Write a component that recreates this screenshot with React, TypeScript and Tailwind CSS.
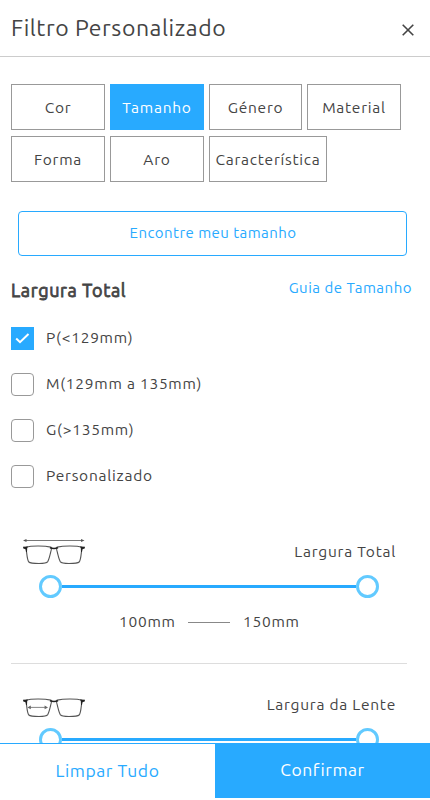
import React, { useState } from 'react';
import clsx from 'clsx';

const TABS = [
  { label: 'Cor', className: 'w-[94px]' },
  { label: 'Tamanho', className: 'w-[94px]' },
  { label: 'Género', className: 'w-[93px]' },
  { label: 'Material', className: 'w-[94px]' },
  { label: 'Forma', className: 'w-[94px]' },
  { label: 'Aro', className: 'w-[94px]' },
  { label: 'Característica', className: 'w-[118px]' },
];

const SIZES = ['P(<129mm)', 'M(129mm a 135mm)', 'G(>135mm)', 'Personalizado'];

function Glasses({ measure }: { measure: 'frame' | 'lens' }) {
  return (
    <svg width="64" height="32" viewBox="0 0 64 32" fill="none" className="block">
      {measure === 'frame' ? (
        <g fill="#555">
          <path d="M3 4.5H60" stroke="#777" strokeWidth="1" />
          <path d="M1 4.5L4.5 2.9V6.1ZM62.5 4.5L59 2.9V6.1Z" />
        </g>
      ) : (
        <g fill="#666">
          <path d="M7 18.4H24" stroke="#777" strokeWidth="0.9" />
          <path d="M5.4 18.4L8.8 16.6V20.2ZM26 18.4L22.6 16.6V20.2Z" />
        </g>
      )}
      <path
        d="M4 11.2C9 9.7 22 9.5 28.8 11.1C30.2 11.6 29.4 13.6 28.6 16.5C27.6 20.4 27 23.6 25.7 25.6C24.6 27.2 22 27.4 17 27.5C11.5 27.5 8.2 27.4 6.8 26C5.2 24.2 5 19 4.2 13"
        stroke="#555"
        strokeWidth="1.1"
      />
      <path
        d="M60 11.2C55 9.7 42 9.5 35.2 11.1C33.8 11.6 34.600 13.6 35.4 16.5C36.4 20.4 37 23.6 38.3 25.6C39.4 27.2 42 27.4 47 27.5C52.5 27.5 55.8 27.4 57.2 26C58.8 24.2 59 19 59.8 13"
        stroke="#555"
        strokeWidth="1.1"
      />
      <path
        d="M1 10.7L6 10.5L5.2 12.2L5 16L4 16L3.6 13.3L1.3 12.6ZM63 10.7L58 10.5L58.8 12.2L59 16L60 16L60.4 13.3L62.7 12.6Z"
        fill="#222"
      />
      <path d="M28 11.8C30 12.5 34 12.5 36 11.8" stroke="#222" strokeWidth="1.7" />
    </svg>
  );
}

interface RangeProps {
  label: string;
  measure: 'frame' | 'lens';
  min?: string;
  max?: string;
}

function Range({ label, measure, min, max }: RangeProps) {
  return (
    <div className="h-[153px] shrink-0 border-b border-[#ddd]">
      <div className="flex h-[57px] items-end justify-between pl-[11px] pr-[11px]">
        <div className="h-[32px]">
          <Glasses measure={measure} />
        </div>
        <span className="mb-[4px] leading-6">{label}</span>
      </div>
      <div className="mt-[7px] ml-7 flex w-[340px] items-center">
        <span className="size-[23px] rounded-full border-[3px] border-[#62caff] bg-white" />
        <span className="h-[3px] flex-1 bg-[#28aaff]" />
        <span className="size-[23px] rounded-full border-[3px] border-[#62caff] bg-white" />
      </div>
      {min && max && (
        <div className="mt-3 flex items-center justify-center gap-[13px] leading-6">
          <span className="w-[56px]">{min}</span>
          <span className="h-px w-[42px] bg-[#888]" />
          <span className="w-[56px]">{max}</span>
        </div>
      )}
    </div>
  );
}

export default function App() {
  const [tab, setTab] = useState('Tamanho');
  const [selected, setSelected] = useState<string[]>(['P(<129mm)']);

  const toggleSize = (size: string) => {
    setSelected(
      selected.includes(size) ? selected.filter((s) => s !== size) : [...selected, size]
    );
  };

  return (
    <div className="flex h-[800px] w-[430px] flex-col overflow-hidden bg-white pb-0.5 font-[Ubuntu,'Noto_Sans',sans-serif] text-[15.5px] tracking-[0.75px] text-[#444]">
      <header className="flex h-[57px] shrink-0 items-center justify-between border-b border-[#ccc] pl-[11px] pr-4">
        <h1 className="text-[23px] leading-8 tracking-[0.55px]">Filtro Personalizado</h1>
        <button aria-label="Fechar" className="mt-[3px]">
          <svg width="12" height="12" viewBox="0 0 12 12" stroke="#444" strokeWidth="1.6">
            <path d="M0.7 0.7L11.3 11.3M11.3 0.7L0.7 11.3" />
          </svg>
        </button>
      </header>

      <main className="flex min-h-0 flex-1 flex-col overflow-hidden pl-[11px] pr-[23px] pt-[27px]">
        {/* Categorias */}
        <div className="flex shrink-0 flex-wrap gap-x-[5px] gap-y-1.5">
          {TABS.map(({ label, className }) => (
            <button
              key={label}
              onClick={() => setTab(label)}
              className={clsx(
                'h-[46px] border pt-px whitespace-nowrap',
                className,
                tab === label ? 'border-[#28aaff] bg-[#28aaff] text-white' : 'border-[#999]'
              )}
            >
              {label}
            </button>
          ))}
        </div>

        <button className="mt-[29px] ml-[7px] h-[45px] shrink-0 rounded border border-[#28aaff] pb-px pl-px text-[15px] tracking-[0.45px] text-[#28aaff]">
          Encontre meu tamanho
        </button>

        {/* Tamanho */}
        <div className="-mr-[5px] mt-[19px] flex h-[32px] shrink-0 justify-between">
          <h2 className="text-lg leading-[31px] tracking-[0.65px] [-webkit-text-stroke:0.8px_#444]">
            Largura Total
          </h2>
          <a className="text-[15px] leading-[25px] tracking-[0.5px] text-[#28aaff]">
            Guia de Tamanho
          </a>
        </div>
        <div className="mt-5 flex shrink-0 flex-col gap-[23px]">
          {SIZES.map((label) => (
            <label key={label} className="flex h-[23px] items-center gap-3">
              <input
                type="checkbox"
                checked={selected.includes(label)}
                onChange={() => toggleSize(label)}
                className="sr-only"
              />
              {selected.includes(label) ? (
                <span className="flex size-[23px] items-center justify-center bg-[#28aaff]">
                  <svg width="15" height="11" viewBox="0 0 15 11" fill="none">
                    <path d="M1.2 5.5L5 9.2L13.5 1" stroke="#fff" strokeWidth="2" />
                  </svg>
                </span>
              ) : (
                <span className="size-[23px] rounded border border-[#999]" />
              )}
              <span className="pb-px">{label}</span>
            </label>
          ))}
        </div>

        {/* Medidas */}
        <div className="mt-[23px] flex shrink-0 flex-col">
          <Range label="Largura Total" measure="frame" min="100mm" max="150mm" />
          <Range label="Largura da Lente" measure="lens" />
        </div>
      </main>

      <footer className="flex h-[55px] shrink-0 text-[17.5px]">
        <button className="w-[215px] border-t border-[#28aaff] tracking-[0.55px] text-[#28aaff]">
          Limpar Tudo
        </button>
        <button className="w-[215px] bg-[#28aaff] tracking-[0.5px] text-white">Confirmar</button>
      </footer>
    </div>
  );
}
